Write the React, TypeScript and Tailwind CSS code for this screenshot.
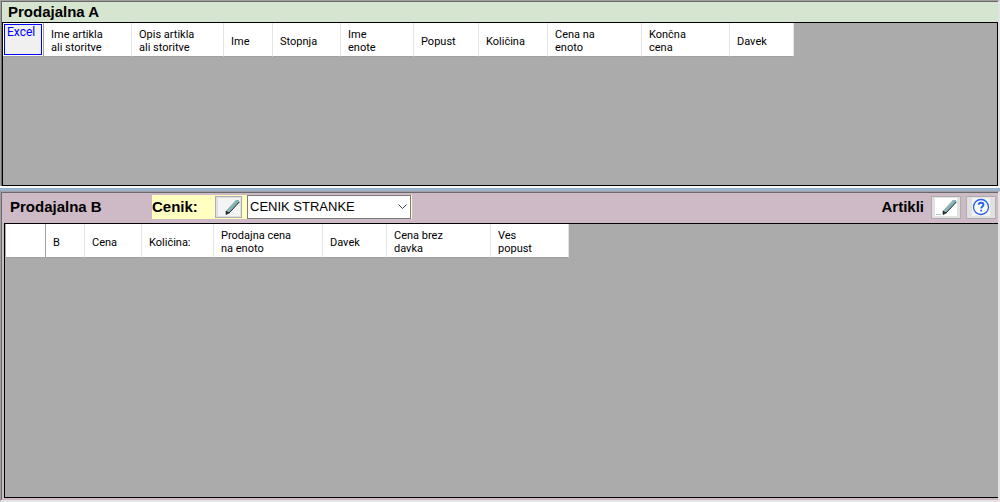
import type { ReactNode } from "react";

type Column = { lines: string[]; width: string };

const topColumns: Column[] = [
  { lines: ["Ime artikla", "ali storitve"], width: "w-[88px]" },
  { lines: ["Opis artikla", "ali storitve"], width: "w-[92px]" },
  { lines: ["Ime"], width: "w-[49px]" },
  { lines: ["Stopnja"], width: "w-[68px]" },
  { lines: ["Ime", "enote"], width: "w-[73px]" },
  { lines: ["Popust"], width: "w-[65px]" },
  { lines: ["Količina"], width: "w-[69px]" },
  { lines: ["Cena na", "enoto"], width: "w-[94px]" },
  { lines: ["Končna", "cena"], width: "w-[88px]" },
  { lines: ["Davek"], width: "w-[64px]" },
];

const bottomColumns: Column[] = [
  { lines: ["B"], width: "w-[39px]" },
  { lines: ["Cena"], width: "w-[57px]" },
  { lines: ["Količina:"], width: "w-[72px]" },
  { lines: ["Prodajna cena", "na enoto"], width: "w-[109px]" },
  { lines: ["Davek"], width: "w-[64px]" },
  { lines: ["Cena brez", "davka"], width: "w-[104px]" },
  { lines: ["Ves", "popust"], width: "w-[78px]" },
];

type GridProps = { label: string; columns: Column[]; cornerWidth: string; corner?: ReactNode };

function Grid({ label, columns, cornerWidth, corner }: GridProps) {
  return (
    <table aria-label={label} className="w-max table-fixed border-separate border-spacing-0 text-[11px] leading-[13px]">
      <thead>
        <tr className="h-[34px]">
          <td className={`${cornerWidth} border-r border-b border-[#a0a0a0] bg-white p-0`}>{corner}</td>
          {columns.map((column, index) => (
            <th
              key={index}
              scope="col"
              className={`${column.width} border-r border-b border-r-[#e3e3e3] border-b-[#a0a0a0] bg-white p-0 pt-[3px] pl-[7px] text-left align-middle font-normal whitespace-nowrap`}
            >
              {column.lines.map((line) => (
                <span key={line} className="block">{line}</span>
              ))}
            </th>
          ))}
        </tr>
      </thead>
    </table>
  );
}

function Pencil({ underscore = false }: { underscore?: boolean }) {
  return (
    <svg width="22" height="18" viewBox="0 0 22 18" aria-hidden="true">
      <rect width="22" height="18" fill={underscore ? "#fff" : "#f4f4f4"} />
      {underscore && <path d="M1 16.500h5" stroke="#a9c9c9" />}
      <path d="M8.500 13L18.500 2H21V4L11 14.500z" fill="#7fb5b8" />
      <path d="M8.500 12.800L18.500 1.800" stroke="#8b9c9c" strokeWidth=".8" fill="none" />
      <path d="M11 15L21.500 3.800" stroke="#111" fill="none" />
      <path d="M8 13v3.500l3.300-1.500z" fill="#333" stroke="#111" strokeWidth=".6" />
    </svg>
  );
}

export default function App() {
  return (
    <main className="flex min-h-screen flex-col bg-[#f0f0f0] font-['Roboto','Liberation_Sans',sans-serif] text-black">
      <section className="flex h-[186px] flex-col border-t border-r-2 border-l border-[#a0a0a0] border-r-[#e3e3e3]">
        <div className="flex flex-1 flex-col border-t border-l border-[#696969]">
          <header className="flex h-5 items-center bg-[#d6e5d0] pl-[6px]">
            <h2 className="font-['Liberation_Sans',sans-serif] text-[15px] leading-5 font-bold">Prodajalna A</h2>
          </header>
          <div className="flex-1 border border-black bg-[#ababab]">
            <Grid
              label="Prodajalna A"
              columns={topColumns}
              cornerWidth="w-[41px]"
              corner={
                <div className="p-px">
                  <button type="button" className="flex h-[31px] w-[38px] items-start border border-[#0000ff] bg-[#f0f0f0] pl-[2px] text-[12px] leading-[15px] text-[#0000ff]">
                    Excel
                  </button>
                </div>
              }
            />
          </div>
        </div>
      </section>

      <div className="h-[5px] border-t-2 border-white bg-[#99b4d1]" />

      <section className="flex flex-1 flex-col border-t border-r-2 border-b-2 border-l border-[#a0a0a0] border-r-[#e3e3e3] border-b-[#e3e3e3]">
        <div className="flex flex-1 flex-col border-t border-l border-[#696969] bg-[#cdbac6] pb-[2px] pl-[2px]">
          <header className="flex h-[30px] items-center justify-between pr-[2px] pb-[2px] pl-[6px] font-['Liberation_Sans',sans-serif] text-[15px] font-bold">
            <div className="flex items-center">
              <h2 className="w-[142px]">Prodajalna B</h2>
              <div className="flex h-6 items-center bg-[#ffffc0] pr-px">
                <label htmlFor="cenik" className="w-[63px]">Cenik:</label>
                <button type="button" aria-label="Uredi cenik" className="mr-[5px] flex h-[22px] w-[27px] items-center justify-center border border-[#adadad] bg-[#e1e1e1]">
                  <Pencil />
                </button>
                <div className="grid items-center">
                  <select id="cenik" className="col-start-1 row-start-1 h-6 w-[164px] appearance-none border border-[#7a7a7a] bg-white pl-[2px] text-[13px] font-normal">
                    <option>CENIK STRANKE</option>
                  </select>
                  <svg className="pointer-events-none col-start-1 row-start-1 mr-1 justify-self-end" width="9" height="6" viewBox="0 0 9 6" fill="none" stroke="#444" aria-hidden="true">
                    <path d="M.5 .5l4 4 4-4" />
                  </svg>
                </div>
              </div>
            </div>
            <div className="flex items-center">
              <span className="mr-[7px]">Artikli</span>
              <button type="button" aria-label="Uredi artikle" className="mr-[5px] flex h-[23px] w-[30px] items-center justify-center border border-[#adadad] bg-[#e1e1e1]">
                <Pencil underscore />
              </button>
              <button type="button" aria-label="Pomoč" className="flex h-[23px] w-[30px] items-center justify-center border border-[#adadad] bg-[#e1e1e1]">
                <svg width="18" height="18" viewBox="0 0 18 18" fill="none" stroke="#2460e8" aria-hidden="true">
                  <rect width="18" height="18" fill="#f4f4f4" stroke="none" />
                  <circle cx="9" cy="9" r="7.500" fill="#fff" strokeWidth="1.300" />
                  <path d="M6.700 6.800C6.700 4 11.500 4 11.500 6.800C11.500 8.500 9.200 8.500 9.200 10.500M9.200 11.800v1.800" strokeWidth="1.900" />
                </svg>
              </button>
            </div>
          </header>
          <div className="flex-1 border border-r-0 border-black bg-[#ababab] pl-px">
            <Grid label="Prodajalna B" columns={bottomColumns} cornerWidth="w-[40px]" />
          </div>
        </div>
      </section>
    </main>
  );
}
